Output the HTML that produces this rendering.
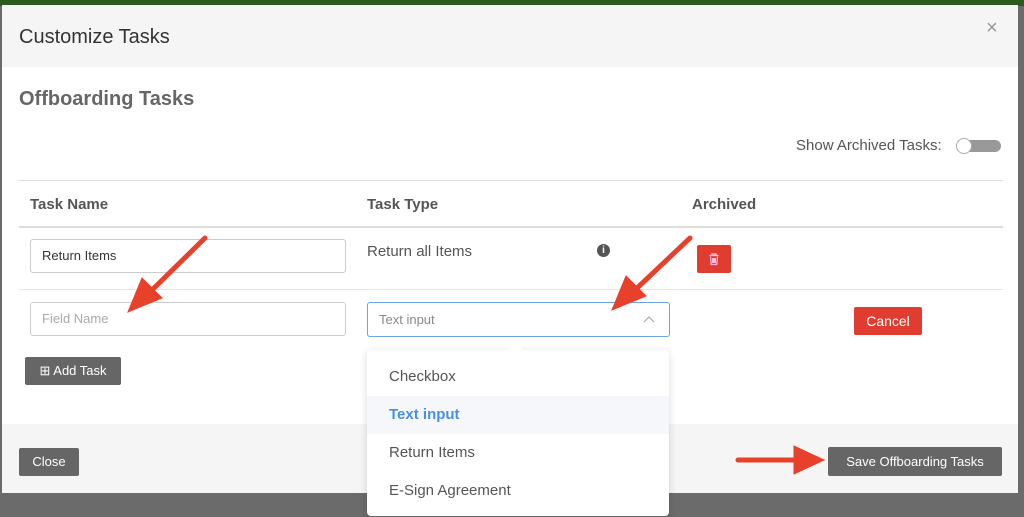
<!DOCTYPE html><html><head><style>
body{margin:0;width:1024px;height:517px;overflow:hidden;background:#6b6b6b;font-family:"Liberation Sans",sans-serif;position:relative}
.a{position:absolute}
.top{left:0;top:0;width:1024px;height:6px;background:#2d5a1e}
.modal{left:2px;top:5px;width:1016px;height:488px;background:#fff}
.hd{left:0;top:0;width:1016px;height:62px;background:#f5f5f5}
.ft{left:0;top:419px;width:1016px;height:69px;background:#f5f5f5}
.btn{position:absolute;color:#fff;font-size:13px;border-radius:2px;text-align:center}
.inp{position:absolute;border:1px solid #ccc;border-radius:3px;font-size:13px;box-sizing:border-box;padding-left:11px}
.opt{position:absolute;left:0;width:302px;height:38px;line-height:38px;padding-left:22px;box-sizing:border-box;font-size:15px;color:#555}
</style></head><body>
<div class="a top"></div>
<div class="a modal">
<div class="a hd"><div class="a" style="left:17px;top:21px;font-size:20px;color:#333">Customize Tasks</div>
<div class="a" style="left:984px;top:12px;font-size:20px;color:#999">×</div></div>
<div class="a" style="left:17px;top:83px;font-size:20px;font-weight:bold;color:#666">Offboarding Tasks</div>
<div class="a" style="left:794px;top:132px;font-size:15px;color:#555">Show Archived Tasks:</div>
<div class="a" style="left:955px;top:135px;width:44px;height:12px;border-radius:6px;background:#999"></div>
<div class="a" style="left:954px;top:133px;width:16px;height:16px;border-radius:8px;background:#fff;border:1px solid #aaa;box-sizing:border-box"></div>
<div class="a" style="left:17px;top:175px;width:984px;height:1px;background:#ddd"></div>
<div class="a" style="left:28px;top:191px;font-size:15px;font-weight:bold;color:#555">Task Name</div>
<div class="a" style="left:365px;top:191px;font-size:15px;font-weight:bold;color:#555">Task Type</div>
<div class="a" style="left:690px;top:191px;font-size:15px;font-weight:bold;color:#555">Archived</div>
<div class="a" style="left:17px;top:221px;width:984px;height:2px;background:#ddd"></div>
<div class="inp" style="left:28px;top:234px;width:316px;height:34px;line-height:32px;color:#333">Return Items</div>
<div class="a" style="left:365px;top:238px;font-size:15px;color:#555">Return all Items</div>
<div class="a" style="left:595px;top:239px;width:13px;height:13px;border-radius:7px;background:#555;color:#fff;font-size:10px;font-weight:bold;text-align:center;line-height:13px">i</div>
<div class="btn" style="left:695px;top:240px;width:34px;height:28px;background:#e03c2f"><svg width="34" height="28"><g fill="none" stroke="#fbd" stroke-width="1.3"><path d="M12.5 10.5h9M15 10.5v-1.5h4v1.5M13.5 11.5l.7 8h5.6l.7-8M15.7 13v5M17 13v5M18.3 13v5"/></g></svg></div>
<div class="a" style="left:17px;top:284px;width:984px;height:1px;background:#e5e5e5"></div>
<div class="inp" style="left:28px;top:297px;width:316px;height:34px;line-height:32px;color:#aaa">Field Name</div>
<div class="inp" style="left:365px;top:297px;width:303px;height:35px;line-height:33px;color:#888;border-color:#6aa3e8">Text input<svg style="position:absolute;right:14px;top:12px" width="12" height="8"><path d="M1 7l5-5 5 5" fill="none" stroke="#aaa" stroke-width="1.2"/></svg></div>
<div class="btn" style="left:852px;top:302px;width:68px;height:28px;line-height:28px;background:#e03c2f;font-size:14px">Cancel</div>
<div class="btn" style="left:23px;top:352px;width:96px;height:28px;line-height:28px;background:#666">⊞ Add Task</div>
<div class="a ft"></div>
<div class="btn" style="left:17px;top:443px;width:60px;height:28px;line-height:28px;background:#666">Close</div>
<div class="btn" style="left:826px;top:442px;width:174px;height:29px;line-height:29px;background:#666">Save Offboarding Tasks</div>
</div>
<div class="a" style="left:367px;top:350px;width:302px;height:166px;background:#fff;border-radius:4px;box-shadow:0 2px 8px rgba(0,0,0,.15)">
<div class="a" style="left:143px;top:-6px;width:10px;height:10px;background:#fff;transform:rotate(45deg)"></div>
<div class="opt" style="top:8px">Checkbox</div>
<div class="opt" style="top:46px;background:#f5f7fa;color:#4a90e2;font-weight:bold">Text input</div>
<div class="opt" style="top:84px">Return Items</div>
<div class="opt" style="top:122px">E-Sign Agreement</div>
</div>
<svg class="a" style="left:0;top:0" width="1024" height="517">
<g fill="#e8412b" stroke="#e8412b" stroke-width="5" stroke-linecap="round">
<line x1="205" y1="238" x2="150" y2="292"/><polygon points="128,312 142,278 162,298" stroke-width="1"/>
<line x1="690" y1="238" x2="635" y2="290"/><polygon points="612,310 626,276 646,296" stroke-width="1"/>
<line x1="738" y1="460" x2="800" y2="460"/><polygon points="824,460 794,446 794,474" stroke-width="1"/>
</g></svg>
</body></html>
